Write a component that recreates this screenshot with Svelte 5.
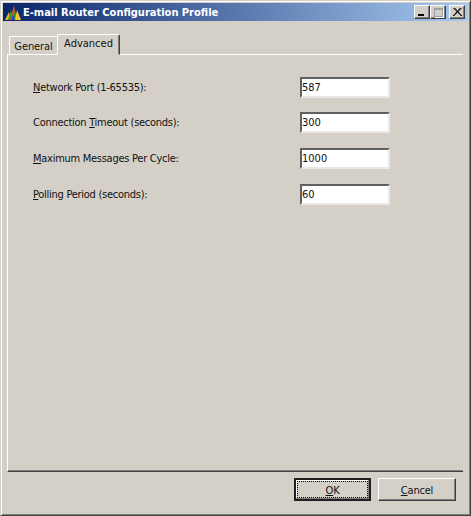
<script lang="ts">
  const fields = [
    { before: "", key: "N", after: "etwork Port (1-65535):", value: "587" },
    { before: "Connection ", key: "T", after: "imeout (seconds):", value: "300" },
    { before: "", key: "M", after: "aximum Messages Per Cycle:", value: "1000" },
    { before: "", key: "P", after: "olling Period (seconds):", value: "60" }
  ];
</script>

<div class="window">
  <div class="titlebar">
    <svg class="logo" width="17" height="17" viewBox="0 0 17 17">
      <path d="M0 16 L4 8 L6 16Z" fill="#e8b820" />
      <path d="M3 16 L6 6 L8 16Z" fill="#2c9a3c" />
      <path d="M5 16 L9 1 L11 16Z" fill="#e85018" />
      <path d="M8 16 L10 5 L12 16Z" fill="#2c9a3c" />
      <path d="M6 16 L8 10 L10 16Z" fill="#2848c0" />
      <path d="M10 16 L12 6 L16 16Z" fill="#f4c820" />
    </svg>
    <span class="title">E-mail Router Configuration Profile</span>
    <div class="controls">
      <button class="ctl" aria-label="Minimize"><i class="min"></i></button>
      <button class="ctl" aria-label="Maximize"><i class="max"></i></button>
      <button class="ctl close" aria-label="Close">
        <svg width="9" height="8" viewBox="0 0 9 8"><path d="M0.5 0 L8.5 8 M8.5 0 L0.5 8 M1.5 0 L9 8 M7.5 0 L0 8" stroke="#000" stroke-width="1" /></svg>
      </button>
    </div>
  </div>

  <div class="tabs">
    <div class="tab">General</div>
    <div class="tab active">Advanced</div>
  </div>

  <div class="panel">
    {#each fields as f}
      <div class="row">
        <span class="label">{f.before}<u>{f.key}</u>{f.after}</span>
        <input class="field" type="text" value={f.value} />
      </div>
    {/each}
  </div>

  <div class="footer">
    <button class="btn default"><span class="focus"><u>O</u>K</span></button>
    <button class="btn"><span><u>C</u>ancel</span></button>
  </div>
</div>

<style>
  :global(body) {
    margin: 0;
    background: #d4d0c8;
  }
  .window {
    box-sizing: border-box;
    width: 471px;
    height: 516px;
    background: #d4d0c8;
    font-family: "DejaVu Sans Condensed", "Liberation Sans", sans-serif;
    font-size: 11px;
    letter-spacing: -0.27px;
    color: #000;
    padding: 4px;
    display: flex;
    flex-direction: column;
    border: 1px solid;
    border-color: #d4d0c8 #404040 #404040 #d4d0c8;
    box-shadow: inset 1px 1px 0 #fff, inset -1px -1px 0 #808080;
  }
  .titlebar {
    height: 18px;
    flex: none;
    margin: -2px -2px 0 -2px;
    display: flex;
    align-items: center;
    padding: 0 3px 0 2px;
    background: linear-gradient(90deg, #0a246a, #a6caf0);
  }
  .logo {
    flex: none;
    margin-right: 1px;
  }
  .title {
    color: #fff;
    font-weight: 700;
    font-size: 11px;
    letter-spacing: 0;
    white-space: nowrap;
  }
  .controls {
    margin-left: auto;
    display: flex;
  }
  .ctl {
    box-sizing: border-box;
    width: 16px;
    height: 14px;
    padding: 0;
    margin: 0;
    background: #d4d0c8;
    border: 1px solid;
    border-color: #fff #404040 #404040 #fff;
    box-shadow: inset -1px -1px 0 #808080;
    position: relative;
    display: flex;
    align-items: center;
    justify-content: center;
  }
  .close {
    margin-left: 3px;
  }
  .min {
    position: absolute;
    left: 3px;
    bottom: 2px;
    width: 6px;
    height: 2px;
    background: #000;
  }
  .max {
    width: 9px;
    height: 9px;
    box-sizing: border-box;
    border: 1px solid #a0a0a0;
    border-top-width: 2px;
    box-shadow: 1px 1px 0 #fff;
  }
  .tabs {
    flex: none;
    display: flex;
    align-items: flex-end;
    padding: 0 0 0 4px;
    margin-top: 13px;
    height: 21px;
    position: relative;
    z-index: 1;
    margin-bottom: -1px;
  }
  .tab {
    box-sizing: border-box;
    height: 19px;
    width: 49px;
    text-align: center;
    padding-top: 3px;
    letter-spacing: -0.1px;
    background: #d4d0c8;
    border: 1px solid;
    border-color: #fff #404040 #d4d0c8 #fff;
    border-radius: 2px 2px 0 0;
    color: #111;
    border-bottom: 1px solid #fff;
  }
  .tab.active {
    height: 21px;
    width: 63px;
    padding-top: 2px;
    margin-left: -1px;
    letter-spacing: 0;
    border-bottom: 1px solid #d4d0c8;
    box-shadow: inset -1px 0 0 #808080;
  }
  .panel {
    flex: 1;
    margin: 0 3px 0 2px;
    border-top: 1px solid #fff;
    border-left: 1px solid #fff;
    padding: 22px 0 0 25px;
    display: flex;
    flex-direction: column;
    gap: 15px;
    border-bottom: 1px solid #404040;
    box-shadow: inset 0 -1px 0 #808080;
  }
  .row {
    height: 20px;
    margin-bottom: 1px;
    display: flex;
    align-items: center;
    justify-content: space-between;
    padding-right: 73px;
  }
  .row:first-child {
    margin-bottom: 0;
  }
  .label {
    color: #111;
  }
  .field {
    box-sizing: border-box;
    width: 90px;
    height: 21px;
    padding: 0;
    font: 11px "DejaVu Sans Condensed", "Liberation Sans", sans-serif;
    color: #111;
    background: #fff;
    border: 2px solid;
    border-color: #606060 #e8e8e8 #e8e8e8 #606060;
    outline: none;
  }
  .footer {
    flex: none;
    height: 39px;
    display: flex;
    justify-content: flex-end;
    gap: 7px;
    padding: 6px 10px 0 0;
    box-sizing: border-box;
  }
  .btn {
    box-sizing: border-box;
    width: 78px;
    height: 23px;
    padding: 2px;
    font: 11px "DejaVu Sans Condensed", "Liberation Sans", sans-serif;
    letter-spacing: -0.2px;
    color: #111;
    background: #d4d0c8;
    border: 1px solid;
    border-color: #fff #404040 #404040 #fff;
    box-shadow: inset -1px -1px 0 #808080;
  }
  .btn span {
    display: block;
    height: 100%;
    line-height: 19px;
  }
  .btn.default {
    width: 77px;
    border: 2px solid #202020;
    padding: 1px;
    box-shadow: inset -1px -1px 0 #808080, inset 1px 1px 0 #fff;
  }
  .focus {
    box-sizing: border-box;
    border: 1px dotted #000;
    line-height: 17px !important;
  }
</style>
